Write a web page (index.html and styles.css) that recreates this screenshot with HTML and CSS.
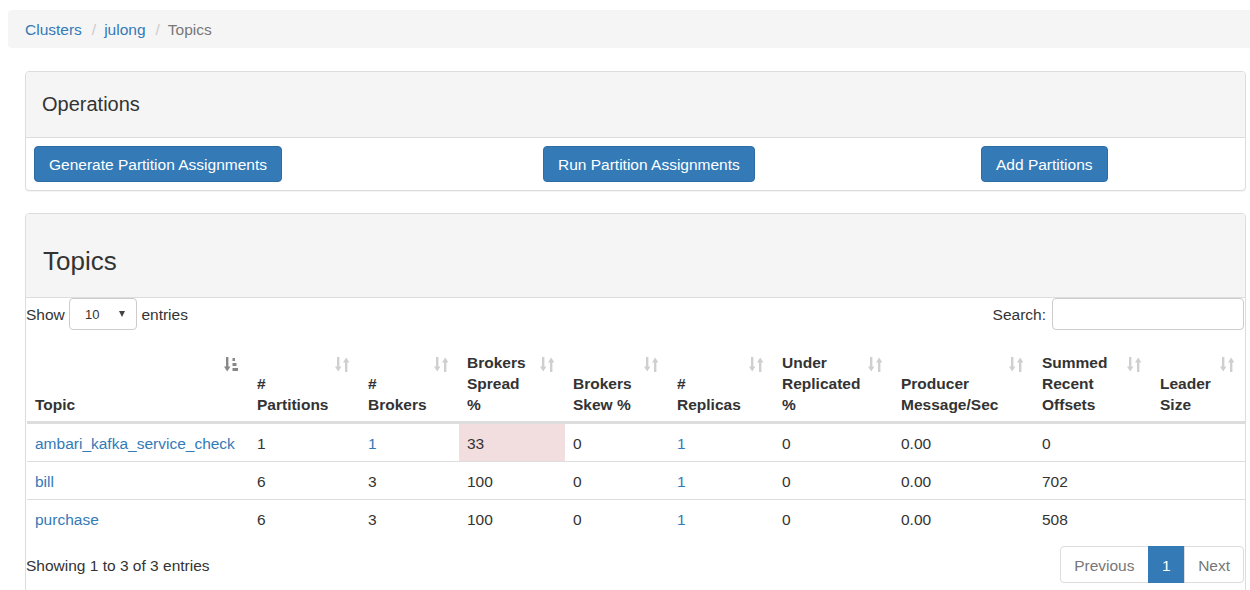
FILE: index.html
```html
<!DOCTYPE html>
<html lang="en">
<head>
<meta charset="utf-8">
<title>Topics</title>
<link rel="stylesheet" href="styles.css">
</head>
<body>
<div class="page">
  <ol class="breadcrumb">
    <li><a href="#">Clusters</a></li>
    <li><a href="#">julong</a></li>
    <li class="active">Topics</li>
  </ol>

  <div class="main">
    <div class="panel">
      <div class="panel-heading">
        <h3 class="ops-title">Operations</h3>
      </div>
      <div class="panel-body ops-body">
        <div class="ops-cell"><button class="btn">Generate Partition Assignments</button></div>
        <div class="ops-cell"><button class="btn">Run Partition Assignments</button></div>
        <div class="ops-cell"><button class="btn">Add Partitions</button></div>
      </div>
    </div>

    <div class="panel">
      <div class="panel-heading">
        <h2 class="topics-title">Topics</h2>
      </div>
      <div class="dt-wrapper">
        <div class="dt-controls">
          <label class="dt-length">Show <span class="select-box"><span class="select-val">10</span><span class="select-arrow"></span></span> entries</label>
          <label class="dt-filter">Search:<span class="search-input"></span></label>
        </div>

        <table class="dt-table">
          <colgroup>
            <col class="c1"><col class="c2"><col class="c3"><col class="c4"><col class="c5">
            <col class="c6"><col class="c7"><col class="c8"><col class="c9"><col class="c10">
          </colgroup>
          <thead>
            <tr>
              <th>Topic<svg class="sort-icon asc" viewBox="0 0 15 15"><rect x="2" y="0" width="2.4" height="10"/><polygon points="0,9.5 6.4,9.5 3.2,14.5"/><rect x="8.5" y="1" width="2.5" height="3"/><rect x="8.5" y="6" width="4" height="3"/><rect x="8.5" y="11" width="5.5" height="3"/></svg></th>
              <th>#<br>Partitions<svg class="sort-icon" viewBox="0 0 15 15"><rect x="2" y="0" width="2.4" height="10"/><polygon points="0,9.5 6.4,9.5 3.2,14.5"/><polygon points="8,5.5 14.4,5.5 11.2,0.5"/><rect x="10" y="5" width="2.4" height="10"/></svg></th>
              <th>#<br>Brokers<svg class="sort-icon" viewBox="0 0 15 15"><rect x="2" y="0" width="2.4" height="10"/><polygon points="0,9.5 6.4,9.5 3.2,14.5"/><polygon points="8,5.5 14.4,5.5 11.2,0.5"/><rect x="10" y="5" width="2.4" height="10"/></svg></th>
              <th>Brokers<br>Spread<br>%<svg class="sort-icon" viewBox="0 0 15 15"><rect x="2" y="0" width="2.4" height="10"/><polygon points="0,9.5 6.4,9.5 3.2,14.5"/><polygon points="8,5.5 14.4,5.5 11.2,0.5"/><rect x="10" y="5" width="2.4" height="10"/></svg></th>
              <th>Brokers<br>Skew %<svg class="sort-icon" viewBox="0 0 15 15"><rect x="2" y="0" width="2.4" height="10"/><polygon points="0,9.5 6.4,9.5 3.2,14.5"/><polygon points="8,5.5 14.4,5.5 11.2,0.5"/><rect x="10" y="5" width="2.4" height="10"/></svg></th>
              <th>#<br>Replicas<svg class="sort-icon" viewBox="0 0 15 15"><rect x="2" y="0" width="2.4" height="10"/><polygon points="0,9.5 6.4,9.5 3.2,14.5"/><polygon points="8,5.5 14.4,5.5 11.2,0.5"/><rect x="10" y="5" width="2.4" height="10"/></svg></th>
              <th>Under<br>Replicated<br>%<svg class="sort-icon" viewBox="0 0 15 15"><rect x="2" y="0" width="2.4" height="10"/><polygon points="0,9.5 6.4,9.5 3.2,14.5"/><polygon points="8,5.5 14.4,5.5 11.2,0.5"/><rect x="10" y="5" width="2.4" height="10"/></svg></th>
              <th>Producer<br>Message/Sec<svg class="sort-icon" viewBox="0 0 15 15"><rect x="2" y="0" width="2.4" height="10"/><polygon points="0,9.5 6.4,9.5 3.2,14.5"/><polygon points="8,5.5 14.4,5.5 11.2,0.5"/><rect x="10" y="5" width="2.4" height="10"/></svg></th>
              <th>Summed<br>Recent<br>Offsets<svg class="sort-icon" viewBox="0 0 15 15"><rect x="2" y="0" width="2.4" height="10"/><polygon points="0,9.5 6.4,9.5 3.2,14.5"/><polygon points="8,5.5 14.4,5.5 11.2,0.5"/><rect x="10" y="5" width="2.4" height="10"/></svg></th>
              <th>Leader<br>Size<svg class="sort-icon" viewBox="0 0 15 15"><rect x="2" y="0" width="2.4" height="10"/><polygon points="0,9.5 6.4,9.5 3.2,14.5"/><polygon points="8,5.5 14.4,5.5 11.2,0.5"/><rect x="10" y="5" width="2.4" height="10"/></svg></th>
            </tr>
          </thead>
          <tbody>
            <tr>
              <td><a href="#">ambari_kafka_service_check</a></td>
              <td>1</td>
              <td><a href="#">1</a></td>
              <td class="danger">33</td>
              <td>0</td>
              <td><a href="#">1</a></td>
              <td>0</td>
              <td>0.00</td>
              <td>0</td>
              <td></td>
            </tr>
            <tr>
              <td><a href="#">bill</a></td>
              <td>6</td>
              <td>3</td>
              <td>100</td>
              <td>0</td>
              <td><a href="#">1</a></td>
              <td>0</td>
              <td>0.00</td>
              <td>702</td>
              <td></td>
            </tr>
            <tr>
              <td><a href="#">purchase</a></td>
              <td>6</td>
              <td>3</td>
              <td>100</td>
              <td>0</td>
              <td><a href="#">1</a></td>
              <td>0</td>
              <td>0.00</td>
              <td>508</td>
              <td></td>
            </tr>
          </tbody>
        </table>

        <div class="dt-footer">
          <div class="dt-info">Showing 1 to 3 of 3 entries</div>
          <ul class="pagination">
            <li class="disabled"><a href="#">Previous</a></li>
            <li class="active"><a href="#">1</a></li>
            <li class="disabled"><a href="#">Next</a></li>
          </ul>
        </div>
      </div>
    </div>
  </div>
</div>
</body>
</html>
```

FILE: styles.css
```css
* { box-sizing: border-box; }

html, body {
  margin: 0;
  padding: 0;
  background: #fff;
}

body {
  font-family: "Liberation Sans", Arial, Helvetica, sans-serif;
  font-size: 15.5px;
  line-height: 21px;
  color: #333;
  overflow: hidden;
}

a {
  color: #337ab7;
  text-decoration: none;
}

.page {
  padding: 10px 0 0 8px;
}

/* breadcrumb */
.breadcrumb {
  display: flex;
  list-style: none;
  margin: 0;
  padding: 9px 17px 8px;
  background: #f5f5f5;
  border-radius: 4px 0 0 4px;
}

.breadcrumb li + li::before {
  content: "/";
  color: #ccc;
  padding: 0 8px 0 10px;
}

.breadcrumb .active {
  color: #777;
}

/* main column */
.main {
  padding: 23px 4px 0 17px;
}

.panel {
  background: #fff;
  border: 1px solid #ddd;
  border-radius: 4px;
  margin-bottom: 22px;
  box-shadow: 0 1px 1px rgba(0, 0, 0, 0.05);
}

.panel-heading {
  background: #f5f5f5;
  border-bottom: 1px solid #ddd;
  border-radius: 3px 3px 0 0;
  padding: 10px 15px 10px 16px;
}

.ops-title {
  margin: 11px 0 12px;
  font-size: 20px;
  line-height: 22px;
  font-weight: normal;
}

.topics-title {
  margin: 23px 0 11px 1px;
  font-size: 26px;
  line-height: 29px;
  font-weight: normal;
}

.ops-body {
  display: grid;
  grid-template-columns: 509px 438px 1fr;
  padding: 8px;
}

.btn {
  font-family: inherit;
  font-size: 15.5px;
  line-height: 20px;
  padding: 8px 14px 6px;
  color: #fff;
  background: #337ab7;
  border: 1px solid #2e6da4;
  border-radius: 4px;
  cursor: pointer;
}

/* datatable controls */
.dt-wrapper {
  padding-bottom: 24px;
}

.dt-controls {
  display: flex;
  justify-content: space-between;
  align-items: center;
  height: 32px;
  margin-right: 1px;
}

.dt-length {
  display: flex;
  align-items: center;
  white-space: pre;
}

.select-box {
  display: inline-flex;
  align-items: center;
  justify-content: space-between;
  width: 68px;
  height: 32px;
  border: 1px solid #ccc;
  border-radius: 4px;
  padding: 0 11px 0 15px;
  font-size: 13px;
  color: #333;
  background: #fff;
}

.select-arrow {
  width: 0;
  height: 0;
  border-left: 3.5px solid transparent;
  border-right: 3.5px solid transparent;
  border-top: 6px solid #444;
}

.dt-filter {
  display: flex;
  align-items: center;
}

.search-input {
  display: inline-block;
  width: 192px;
  height: 32px;
  margin-left: 6px;
  border: 1px solid #ccc;
  border-radius: 4px;
  background: #fff;
}

/* table */
.dt-table {
  width: calc(100% - 1px);
  margin-left: 1px;
  table-layout: fixed;
  border-collapse: separate;
  border-spacing: 0;
  margin-top: 12px;
}

.c1 { width: 222px; }
.c2 { width: 111px; }
.c3 { width: 99px; }
.c4 { width: 106px; }
.c5 { width: 104px; }
.c6 { width: 105px; }
.c7 { width: 119px; }
.c8 { width: 141px; }
.c9 { width: 118px; }
.c10 { width: auto; }

.dt-table th {
  position: relative;
  text-align: left;
  vertical-align: bottom;
  font-weight: bold;
  padding: 10px 30px 6px 8px;
  border-bottom: 2px solid #ddd;
  white-space: nowrap;
}

.dt-table td {
  padding: 9px 8px 7px;
  border-top: 1px solid #ddd;
  vertical-align: top;
  white-space: nowrap;
}

.dt-table td.danger {
  background: #f2dede;
}

.sort-icon {
  position: absolute;
  top: 15px;
  right: 10px;
  width: 15px;
  height: 15px;
  fill: #cfcfcf;
}

.sort-icon.asc {
  fill: #888;
}

/* footer */
.dt-footer {
  display: flex;
  justify-content: space-between;
  align-items: flex-start;
  margin-top: 9px;
}

.dt-info {
  padding-top: 9px;
}

.pagination {
  display: flex;
  list-style: none;
  margin: 0 1px 0 0;
  padding: 0;
}

.pagination li a {
  display: block;
  padding: 8px 13px 6px;
  line-height: 21px;
  border: 1px solid #ddd;
  margin-left: -1px;
  background: #fff;
}

.pagination li:first-child a {
  margin-left: 0;
  border-radius: 4px 0 0 4px;
}

.pagination li:last-child a {
  border-radius: 0 4px 4px 0;
}

.pagination li.disabled a {
  color: #777;
}

.pagination li.active a {
  padding-left: 13.5px;
  padding-right: 13.5px;
  background: #337ab7;
  border-color: #337ab7;
  color: #fff;
}
```
